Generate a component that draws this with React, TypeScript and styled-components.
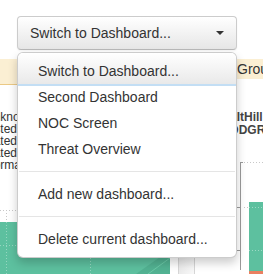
import React from "react";
import styled, { createGlobalStyle } from "styled-components";

const GlobalStyle = createGlobalStyle`
  html, body {
    margin: 0;
    padding: 0;
    background: #fff;
  }
  body {
    font-family: "Liberation Sans", Arial, sans-serif;
    color: #333;
  }
`;

const Page = styled.div`
  position: relative;
  width: 263px;
  height: 274px;
  overflow: hidden;
  background: #fff;
`;

const Toolbar = styled.div`
  padding: 16px 17px 9px;
`;

const DropdownWrap = styled.div`
  position: relative;
  width: 220px;
`;

const ToggleButton = styled.button`
  box-sizing: border-box;
  display: flex;
  align-items: center;
  justify-content: space-between;
  width: 220px;
  height: 34px;
  padding: 0 12px;
  border: 1px solid #ccc;
  border-bottom-color: #b8b8b8;
  border-radius: 4px;
  background: linear-gradient(#ffffff, #e6e6e6);
  box-shadow: inset 0 1px 0 rgba(255, 255, 255, 0.2), 0 1px 2px rgba(0, 0, 0, 0.05);
  font-family: "Liberation Sans", Arial, sans-serif;
  font-size: 14px;
  line-height: 20px;
  color: #333;
  cursor: pointer;
`;

const Caret = styled.span`
  width: 0;
  height: 0;
  border-top: 4px solid #333;
  border-left: 4px solid transparent;
  border-right: 4px solid transparent;
`;

const Menu = styled.ul`
  box-sizing: border-box;
  position: absolute;
  top: calc(100% + 2px);
  left: 0;
  z-index: 10;
  width: 220px;
  margin: 0;
  padding: 5px 0;
  list-style: none;
  background: #fff;
  border: 1px solid rgba(0, 0, 0, 0.2);
  border-radius: 6px;
  box-shadow: 0 5px 10px rgba(0, 0, 0, 0.2);
`;

const MenuItem = styled.li<{ $active?: boolean }>`
  padding: ${(p) => (p.$active ? "8px 20px 3px" : "3px 20px")};
  margin-top: ${(p) => (p.$active ? "-5px" : "0")};
  border-radius: ${(p) => (p.$active ? "5px 5px 0 0" : "0")};
  background: ${(p) => (p.$active ? "linear-gradient(#ffffff, #e9e9e9)" : "transparent")};
  box-shadow: ${(p) => (p.$active ? "0 2px 0 #c3def4" : "none")};
  font-size: 14px;
  line-height: 20px;
  color: #333;
  white-space: nowrap;
  cursor: pointer;
`;

const Divider = styled.li`
  height: 1px;
  margin: 9px 1px;
  background: #e5e5e5;
`;

const Dashboard = styled.div`
  display: flex;
  align-items: stretch;
  height: 215px;
`;

const LeftPanel = styled.section`
  display: flex;
  flex-direction: column;
  flex: 0 0 193px;
  margin-left: -15px;
`;

const Gutter = styled.div`
  box-sizing: border-box;
  flex: 0 0 17px;
  border-left: 1px solid #d6d6d6;
  border-right: 1px solid #d6d6d6;
  background: linear-gradient(to right, #ebebeb, #f8f8f8);
`;

const RightPanel = styled.section`
  display: flex;
  flex-direction: column;
  flex: 1;
  min-width: 0;
`;

const PanelHeader = styled.div<{ $tall?: boolean }>`
  height: ${(p) => (p.$tall ? "25px" : "20px")};
  padding-left: 42px;
  background: #fbefd3;
  border-bottom: ${(p) => (p.$tall ? "1px solid #ebc985" : "none")};
  font-size: 14px;
  line-height: 20px;
  color: #333;
  white-space: nowrap;
  overflow: hidden;
`;

const Labels = styled.ul`
  margin: 26px 0 0;
  padding: 0;
  list-style: none;
  font-size: 12px;
  line-height: 12px;
  color: #333;
`;

const Title = styled.div`
  margin-top: 32px;
  padding-left: 27px;
  font-size: 12px;
  font-weight: bold;
  line-height: 12.5px;
  color: #444;
  white-space: nowrap;
`;

const ChartSvg = styled.svg<{ $gap: number }>`
  display: block;
  margin-top: ${(p) => p.$gap}px;
  flex: none;
`;

const GREEN = "#5dc09f";

function LeftChart() {
  return (
    <ChartSvg $gap={28.5} width={193} height={74} viewBox="0 0 193 74">
      <line x1={0} y1={10.5} x2={193} y2={10.5} stroke="#c8c8c8" strokeDasharray="1 2" />
      <line x1={21.5} y1={10} x2={21.5} y2={22} stroke="#c8c8c8" strokeDasharray="1 2" />
      <rect x={0} y={22} width={185} height={52} fill={GREEN} />
      <polygon points="151,74 185,50 185,74" fill="#52b292" />
      <line x1={163} y1={74} x2={185} y2={58} stroke="#6ccaa9" strokeWidth={1} />
      <line x1={0} y1={45.5} x2={185} y2={45.5} stroke="rgba(255,255,255,0.35)" strokeDasharray="1 2" />
      <line x1={21.5} y1={22} x2={21.5} y2={74} stroke="rgba(255,255,255,0.35)" strokeDasharray="1 2" />
      <line x1={105.5} y1={22} x2={105.5} y2={74} stroke="rgba(255,255,255,0.35)" strokeDasharray="1 2" />
    </ChartSvg>
  );
}

function RightChart() {
  return (
    <ChartSvg $gap={24} width={68} height={114} viewBox="0 0 68 114">
      <line x1={45.5} y1={2} x2={45.5} y2={110} stroke="#9a9a9a" />
      <line x1={45} y1={2.5} x2={48} y2={2.5} stroke="#9a9a9a" />
      <line x1={42} y1={47.5} x2={46} y2={47.5} stroke="#9a9a9a" />
      <line x1={42} y1={90.5} x2={46} y2={90.5} stroke="#9a9a9a" />
      <line x1={49} y1={2.5} x2={68} y2={2.5} stroke="#c8c8c8" strokeDasharray="1 2" />
      <line x1={49} y1={47.5} x2={54} y2={47.5} stroke="#c8c8c8" strokeDasharray="1 2" />
      <rect x={54} y={42} width={14} height={69} fill={GREEN} />
      <rect x={54} y={111} width={14} height={3} fill="#ea8061" />
      <line x1={54} y1={47.5} x2={68} y2={47.5} stroke="rgba(255,255,255,0.4)" strokeDasharray="1 2" />
      <line x1={54} y1={90.5} x2={68} y2={90.5} stroke="rgba(255,255,255,0.4)" strokeDasharray="1 2" />
    </ChartSvg>
  );
}

const dashboards = ["Switch to Dashboard...", "Second Dashboard", "NOC Screen", "Threat Overview"];
const labels = ["Unknown", "Listed", "Rated", "Dated", "Normal"];

export default function App() {
  return (
    <>
      <GlobalStyle />
      <Page>
        <Toolbar>
          <DropdownWrap>
            <ToggleButton>
              <span>Switch to Dashboard...</span>
              <Caret />
            </ToggleButton>
            <Menu>
              {dashboards.map((name, i) => (
                <MenuItem key={name} $active={i === 0}>
                  {name}
                </MenuItem>
              ))}
              <Divider />
              <MenuItem>Add new dashboard...</MenuItem>
              <Divider />
              <MenuItem>Delete current dashboard...</MenuItem>
            </Menu>
          </DropdownWrap>
        </Toolbar>

        <Dashboard>
          <LeftPanel>
            <PanelHeader $tall />
            <Labels>
              {labels.map((l) => (
                <li key={l}>{l}</li>
              ))}
            </Labels>
            <LeftChart />
          </LeftPanel>
          <Gutter />
          <RightPanel>
            <PanelHeader>Group</PanelHeader>
            <Title>
              <div>SaltHill</div>
              <div>LODGRP</div>
            </Title>
            <RightChart />
          </RightPanel>
        </Dashboard>
      </Page>
    </>
  );
}
